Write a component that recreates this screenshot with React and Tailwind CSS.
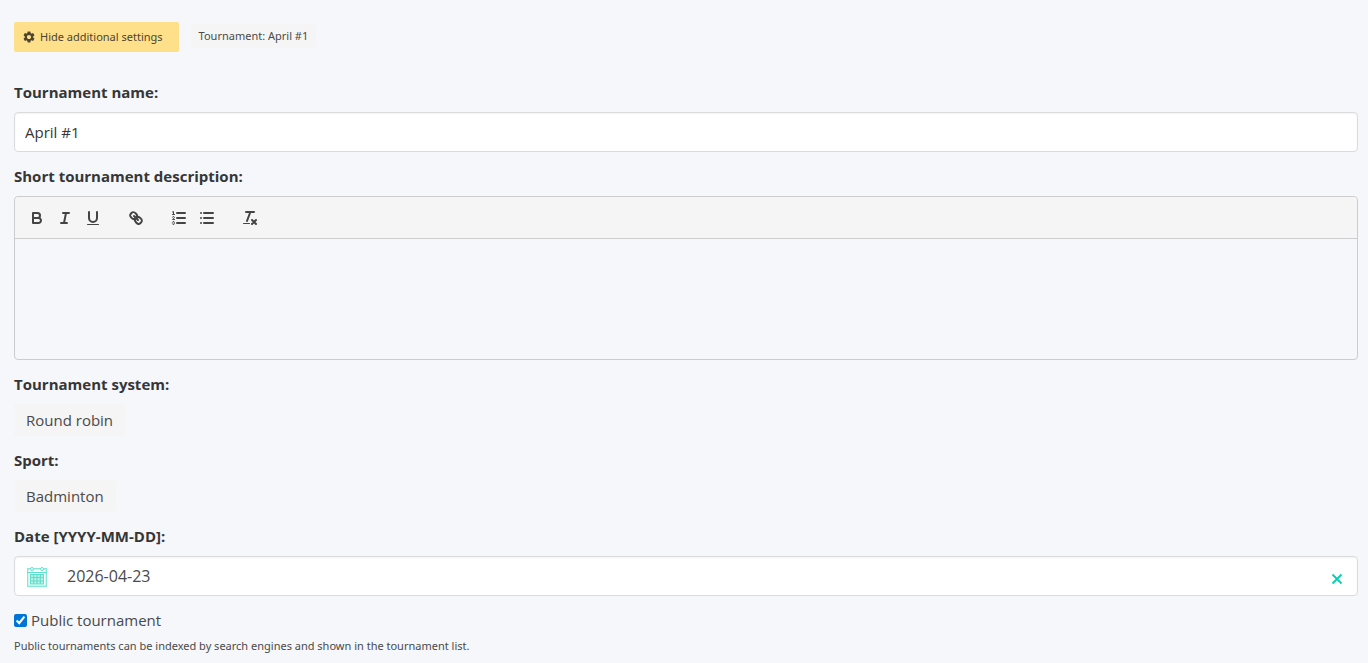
import React, { useState } from 'react';
import { MdSettings } from 'react-icons/md';

const toolbarGroups = [
  [
    {
      label: 'Bold',
      icon: (
        <>
          <path d="M5,4H9.5A2.5,2.5,0,0,1,12,6.5v0A2.5,2.5,0,0,1,9.5,9H5Z" />
          <path d="M5,9h5.5A2.5,2.5,0,0,1,13,11.5v0A2.5,2.5,0,0,1,10.5,14H5Z" />
        </>
      ),
    },
    {
      label: 'Italic',
      icon: <path d="M7,4H13M5,14H11M8,14L10,4" />,
    },
    {
      label: 'Underline',
      icon: (
        <>
          <path d="M5,3V9a4.012,4.012,0,0,0,4,4H9a4.012,4.012,0,0,0,4-4V3" />
          <rect x="3" y="15" width="12" height="1" rx="0.5" fill="currentColor" stroke="none" />
        </>
      ),
    },
  ],
  [
    {
      label: 'Link',
      icon: (
        <>
          <path d="M7,7L11,11" />
          <path d="M8.9,4.577a3.476,3.476,0,0,1,.36,4.679A3.476,3.476,0,0,1,4.577,8.9C3.185,7.5,2.035,6.4,4.217,4.217S7.5,3.185,8.9,4.577Z" />
          <path d="M13.423,9.1a3.476,3.476,0,0,0-4.679-.36,3.476,3.476,0,0,0,.36,4.679c1.392,1.392,2.5,2.542,4.679.36S14.815,10.5,13.423,9.1Z" />
        </>
      ),
    },
  ],
  [
    {
      label: 'Ordered list',
      icon: (
        <>
          <path d="M7,4H15M7,9H15M7,14H15" />
          <path strokeWidth="1" d="M2.5,5.5H4.5M2.5,3L3.5,2.5V5.5" />
          <path strokeWidth="1" d="M4.5,10.5h-2c0-.234,1.85-1.076,1.85-2.234A0.959,0.959,0,0,0,2.5,8.156" />
          <path strokeWidth="1" d="M2.5,14.846a0.959,0.959,0,0,0,1.85-.109A0.7,0.7,0,0,0,3.75,14a0.688,0.688,0,0,0,.6-0.736,0.959,0.959,0,0,0-1.85-.109" />
        </>
      ),
    },
    {
      label: 'Bullet list',
      icon: <path d="M6,4H15M6,9H15M6,14H15M3,4H3M3,9H3M3,14H3" />,
    },
  ],
  [
    {
      label: 'Clear formatting',
      icon: (
        <>
          <path d="M5,3H13M6,12L9.35,3M11,11L15,15M15,11L11,15" />
          <rect x="2" y="14" width="7" height="1" rx="0.5" fill="currentColor" stroke="none" />
        </>
      ),
    },
  ],
];

function CalendarIcon() {
  return (
    <svg viewBox="0 0 20 20" className="mt-0.5 h-5 w-5" fill="none" stroke="#5ce0cb" aria-hidden="true">
      <path strokeWidth="1.4" stroke="#85e8d8" d="M3,1.7H0.7V19.3H19.3V1.7H17M7,1.7H13" />
      <path d="M0.5,5.5H19.5" />
      <circle cx="5" cy="2" r="1.5" />
      <circle cx="15" cy="2" r="1.5" />
      <rect x="3.5" y="7.5" width="13" height="9.5" fill="#b8f2e8" />
      <path strokeWidth="1.2" d="M3.5,10.5H16.5M3.5,14H16.5M6.7,7.5V17M10,7.5V17M13.3,7.5V17" />
    </svg>
  );
}

function Editor() {
  return (
    <div className="rounded border border-[#cccccc]">
      <div className="flex h-[42px] items-center gap-[15px] rounded-t border-b border-[#cccccc] bg-[#f5f5f5] px-2">
        {toolbarGroups.map((group) => (
          <div key={group[0].label} className="flex">
            {group.map(({ label, icon }) => (
              <button key={label} type="button" aria-label={label} className="h-6 w-7 px-[5px] py-[3px] text-[#444444]">
                <svg viewBox="0 0 18 18" className="h-[18px] w-[18px]" fill="none" stroke="currentColor" strokeWidth="2" strokeLinecap="round" strokeLinejoin="round">
                  {icon}
                </svg>
              </button>
            ))}
          </div>
        ))}
      </div>
      <div
        className="h-[120px] px-4 py-3 outline-none"
        contentEditable
        suppressContentEditableWarning
        role="textbox"
        aria-labelledby="description-label"
      />
    </div>
  );
}

function Tag({ children }) {
  return <span className="inline-flex h-8 items-center rounded bg-[#f5f5f5] px-3 text-[#4a4a4a]">{children}</span>;
}

function App() {
  const [name, setName] = useState('April #1');
  const [date, setDate] = useState('2026-04-23');
  const [isPublic, setIsPublic] = useState(true);

  return (
    <div className="min-h-screen bg-[#f5f7fb] pt-[22px] pr-2.5 pl-3.5 font-['Segoe_UI','Open_Sans',sans-serif] text-[15px] leading-6 text-[#4a4a4a]">
      <div className="mb-7 flex items-start gap-3 font-['Segoe_UI','Noto_Sans',sans-serif] text-[11px]">
        <button type="button" className="flex h-[30px] items-center gap-1 rounded-xs bg-[#ffe08a] pr-4 pl-2 text-[#4d452e]">
          <MdSettings className="h-3.5 w-3.5" />
          Hide additional settings
        </button>
        <span className="mt-0.5 flex h-6 items-center rounded bg-[#f5f5f5] px-2">Tournament: April #1</span>
      </div>

      <div className="flex flex-col gap-3">
        <div>
          <label htmlFor="name" className="mb-2 block font-bold text-[#363636]">Tournament name:</label>
          <input
            id="name"
            type="text"
            value={name}
            onChange={(e) => setName(e.target.value)}
            className="block h-10 w-full rounded border border-[#dbdbdb] bg-white px-2.5 text-[#363636] shadow-[inset_0_1px_2px_rgba(10,10,10,0.05)]"
          />
        </div>

        <div>
          <div id="description-label" className="mb-2 font-bold text-[#363636]">Short tournament description:</div>
          <Editor />
        </div>

        <div>
          <div className="mb-2 font-bold text-[#363636]">Tournament system:</div>
          <div className="flex"><Tag>Round robin</Tag></div>
        </div>

        <div>
          <div className="mb-2 font-bold text-[#363636]">Sport:</div>
          <div className="flex"><Tag>Badminton</Tag></div>
        </div>

        <div>
          <label htmlFor="date" className="mb-2 block font-bold text-[#363636]">Date [YYYY-MM-DD]:</label>
          <div className="flex h-10 items-center rounded border border-[#dbdbdb] bg-white pr-3.5 pl-3 shadow-[inset_0_1px_2px_rgba(10,10,10,0.05)]">
            <CalendarIcon />
            <input
              id="date"
              type="text"
              value={date}
              onChange={(e) => setDate(e.target.value)}
              className="ml-5 min-w-0 flex-1 text-base outline-none"
            />
            <button type="button" aria-label="Clear date" onClick={() => setDate('')} className="mt-1.5 text-[#00d1b2]">
              <svg viewBox="0 0 12 12" className="h-3 w-3" fill="none" stroke="currentColor" strokeWidth="1.8">
                <path d="M1.5,1.5L10.5,10.5M10.5,1.5L1.5,10.5" />
              </svg>
            </button>
          </div>
        </div>

        <div>
          <label className="flex items-center gap-1">
            <input type="checkbox" checked={isPublic} onChange={(e) => setIsPublic(e.target.checked)} className="h-[13px] w-[13px] accent-[#0075d7]" />
            Public tournament
          </label>
          <p className="mt-1 font-['Segoe_UI','Noto_Sans',sans-serif] text-[11px] leading-5">
            Public tournaments can be indexed by search engines and shown in the tournament list.
          </p>
        </div>
      </div>
    </div>
  );
}
export default App;
